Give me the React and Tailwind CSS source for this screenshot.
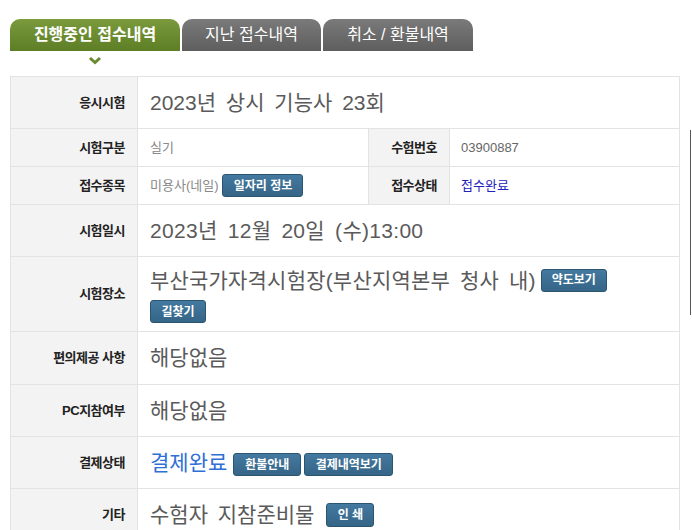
import React from 'react';

const font = { fontFamily: '"Liberation Sans", "Noto Sans CJK KR", sans-serif' };

const Btn = ({ children, className = '' }) => (
  <span
    className={`inline-flex shrink-0 whitespace-nowrap items-center justify-center h-[23px] px-[8px] rounded-[3px] border border-[#2a5470] bg-gradient-to-b from-[#4479a0] to-[#356587] text-white text-[12px] font-bold leading-none align-middle ${className}`}
  >
    {children}
  </span>
);

const Label = ({ children, className = '' }) => (
  <div className={`bg-[#f3f3f3] flex items-center justify-end pr-[12px] text-[13px] font-bold text-[#222] tracking-[-0.5px] ${className}`}>
    {children}
  </div>
);

const App = () => {
  const tabs = [
    { name: '진행중인 접수내역', active: true, w: 'w-[170px]' },
    { name: '지난 접수내역', w: 'w-[139px]' },
    { name: '취소 / 환불내역', w: 'w-[150px]' },
  ];

  const bigRows = [
    { label: '편의제공 사항', value: '해당없음', h: 'h-[53px]' },
    { label: 'PC지참여부', value: '해당없음', h: 'h-[52px]' },
  ];

  return (
    <div className="relative w-[692px] h-[530px] overflow-hidden bg-white" style={font}>
      <div className="absolute left-[690px] top-[130px] w-px h-[185px] bg-[#555]" />

      {/* tabs */}
      <div className="flex items-end gap-[2px] pl-[10px] pt-[19px]">
        {tabs.map((t, i) => (
          <div
            key={i}
            className={`${t.w} h-[32px] rounded-t-[10px] flex items-center justify-center text-white text-[16px] ${
              t.active
                ? 'bg-gradient-to-b from-[#7a9a3c] to-[#5e7e26] font-bold'
                : 'bg-gradient-to-b from-[#7a7a7a] to-[#5e5e5e]'
            }`}
          >
            {t.name}
          </div>
        ))}
      </div>
      <div className="pl-[88px] h-[25px] pt-[5px]">
        <svg width="14" height="9" viewBox="0 0 14 9">
          <path d="M2 2 L7 6.5 L12 2" fill="none" stroke="#6a8a30" strokeWidth="3" />
        </svg>
      </div>

      {/* table */}
      <div className="ml-[10px] w-[670px] border-t border-l border-r border-[#e3e3e3]">
        <div className="flex h-[52px] border-b border-[#e3e3e3]">
          <Label className="w-[127px] border-r border-[#e3e3e3]">응시시험</Label>
          <div className="flex-1 flex items-center pl-[12px] text-[21px] text-[#5a5a5a] [word-spacing:4px]">2023년 상시 기능사 23회</div>
        </div>

        <div className="flex h-[38px] border-b border-[#e3e3e3]">
          <Label className="w-[127px] border-r border-[#e3e3e3]">시험구분</Label>
          <div className="w-[231px] flex items-center pl-[12px] text-[13px] text-[#888] border-r border-[#e3e3e3]">실기</div>
          <Label className="w-[81px] border-r border-[#e3e3e3]">수험번호</Label>
          <div className="flex-1 flex items-center pl-[11px] text-[13px] text-[#666]">03900887</div>
        </div>

        <div className="flex h-[38px] border-b border-[#e3e3e3]">
          <Label className="w-[127px] border-r border-[#e3e3e3]">접수종목</Label>
          <div className="w-[231px] flex items-center gap-[4px] pl-[12px] text-[13px] text-[#888] border-r border-[#e3e3e3]">
            미용사(네일)
            <Btn className="w-[81px]">일자리 정보</Btn>
          </div>
          <Label className="w-[81px] border-r border-[#e3e3e3]">접수상태</Label>
          <div className="flex-1 flex items-center pl-[11px] text-[13px] text-[#2222bb]">접수완료</div>
        </div>

        <div className="flex h-[52px] border-b border-[#e3e3e3]">
          <Label className="w-[127px] border-r border-[#e3e3e3]">시험일시</Label>
          <div className="flex-1 flex items-center pl-[12px] text-[21px] text-[#5a5a5a] [word-spacing:4px] tracking-[0.3px]">2023년 12월 20일 (수)13:00</div>
        </div>

        <div className="flex h-[75px] border-b border-[#e3e3e3]">
          <Label className="w-[127px] border-r border-[#e3e3e3]">시험장소</Label>
          <div className="flex-1 flex flex-col justify-center gap-[3px] pl-[12px]">
            <div className="flex items-center gap-[5px] text-[21px] text-[#5a5a5a]">
              <span className="[word-spacing:4px] tracking-[0.2px]">부산국가자격시험장(부산지역본부 청사 내)</span>
              <Btn className="w-[66px]">약도보기</Btn>
            </div>
            <div>
              <Btn className="w-[56px]">길찾기</Btn>
            </div>
          </div>
        </div>

        {bigRows.map((r, i) => (
          <div key={i} className={`flex ${r.h} border-b border-[#e3e3e3]`}>
            <Label className="w-[127px] border-r border-[#e3e3e3]">{r.label}</Label>
            <div className="flex-1 flex items-center pl-[12px] text-[21px] text-[#5a5a5a]">{r.value}</div>
          </div>
        ))}

        <div className="flex h-[52px] border-b border-[#e3e3e3]">
          <Label className="w-[127px] border-r border-[#e3e3e3]">결제상태</Label>
          <div className="flex-1 flex items-center gap-[3px] pl-[12px]">
            <span className="text-[21px] text-[#2f6fd6] mr-[3px]">결제완료</span>
            <Btn className="mt-[4px] w-[68px]">환불안내</Btn>
            <Btn className="mt-[4px] w-[89px]">결제내역보기</Btn>
          </div>
        </div>

        <div className="flex h-[52px] border-b border-[#e3e3e3]">
          <Label className="w-[127px] border-r border-[#e3e3e3]">기타</Label>
          <div className="flex-1 flex items-center gap-[12px] pl-[12px]">
            <span className="text-[21px] text-[#5a5a5a] [word-spacing:4px]">수험자 지참준비물</span>
            <Btn className="h-[24px] w-[48px]">인 쇄</Btn>
          </div>
        </div>
      </div>
    </div>
  );
};

export default App;
